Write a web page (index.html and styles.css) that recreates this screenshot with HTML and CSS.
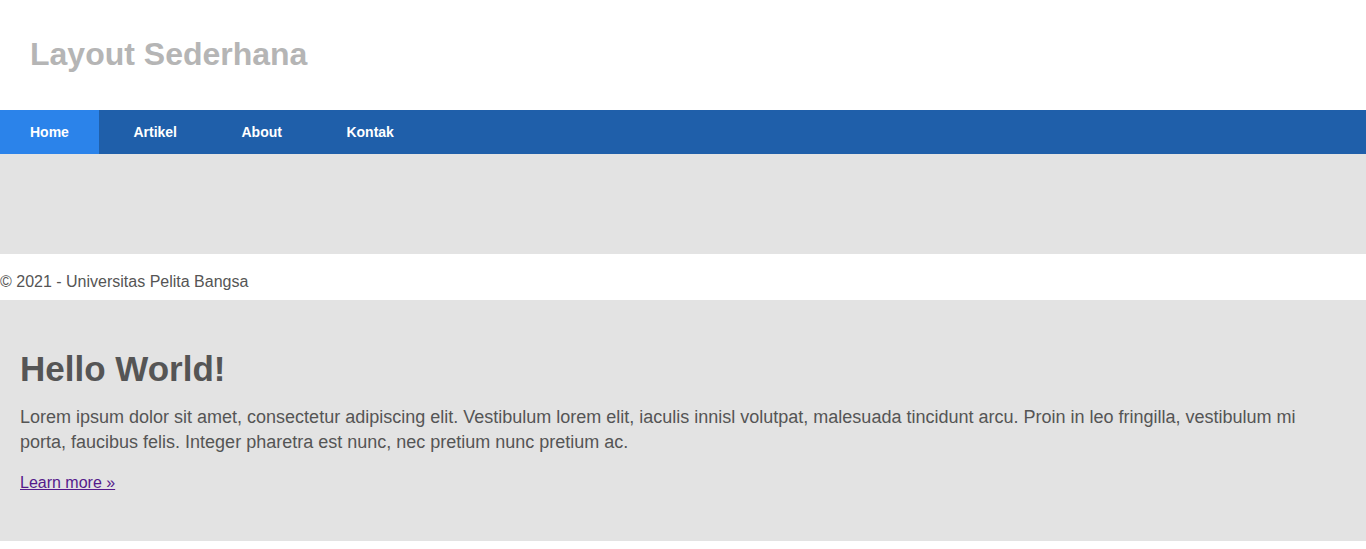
FILE: index.html
```html
<!DOCTYPE html>
<html>
<head>
<meta charset="utf-8">
<title>Layout Sederhana</title>
<link rel="stylesheet" href="styles.css">
</head>
<body>
<header class="site-header">
  <h1 class="site-title">Layout Sederhana</h1>
</header>
<nav class="main-nav">
  <a class="nav-link active" href="#">Home</a>
  <a class="nav-link" href="#">Artikel</a>
  <a class="nav-link" href="#">About</a>
  <a class="nav-link" href="#">Kontak</a>
</nav>
<div class="banner"></div>
<footer class="site-footer">
  <p>&copy; 2021 - Universitas Pelita Bangsa</p>
</footer>
<section class="hero">
  <h2 class="hero-title">Hello World!</h2>
  <p class="hero-text">Lorem ipsum dolor sit amet, consectetur adipiscing elit. Vestibulum lorem elit, iaculis innisl volutpat, malesuada tincidunt arcu. Proin in leo fringilla, vestibulum mi porta, faucibus felis. Integer pharetra est nunc, nec pretium nunc pretium ac.</p>
  <a class="hero-link" href="#">Learn more &raquo;</a>
</section>
</body>
</html>
```

FILE: styles.css
```css
html, body {
  margin: 0;
  padding: 0;
  background: #fff;
}
body {
  font-family: "Liberation Sans", Arial, sans-serif;
  color: #5a5a5a;
}
.site-header {
  height: 108px;
  padding: 0 30px 2px;
  display: flex;
  align-items: center;
}
.site-title {
  margin: 0;
  font-size: 32px;
  font-weight: bold;
  color: #b5b5b5;
}
.main-nav {
  display: flex;
  gap: 4.5px;
  height: 44px;
  background: #1f5faa;
}
.nav-link {
  display: block;
  padding: 0 30px;
  line-height: 44px;
  font-size: 14px;
  font-weight: bold;
  color: #fff;
  text-decoration: none;
}
.nav-link.active {
  background: #2b83ea;
}
.banner {
  height: 100px;
  background: #e3e3e3;
}
.site-footer {
  height: 46px;
  box-sizing: border-box;
  padding-top: 19px;
}
.site-footer p {
  margin: 0;
  font-size: 16px;
  line-height: 18px;
  color: #555;
}
.hero {
  background: #e3e3e3;
  padding: 48px 20px 0;
  height: 193px;
}
.hero-title {
  margin: 0 0 16px;
  font-size: 35px;
  line-height: 41px;
  font-weight: bold;
  color: #555;
}
.hero-text {
  margin: 0 0 19px;
  font-size: 18px;
  line-height: 25px;
  color: #555;
}
.hero-link {
  font-size: 16px;
  color: #551a8b;
}
```
